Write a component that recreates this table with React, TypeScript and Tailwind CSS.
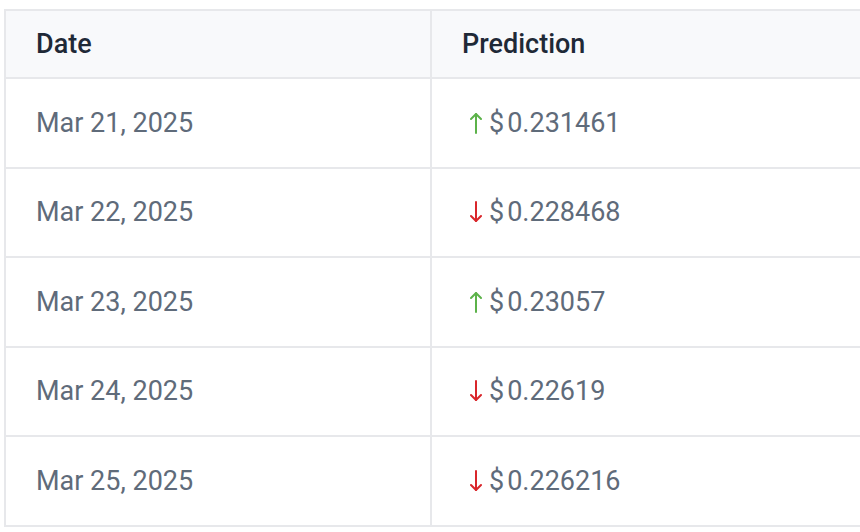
import React from "react";

type Row = { date: string; up: boolean; price: string };

const rows: Row[] = [
  { date: "Mar 21, 2025", up: true, price: "0.231461" },
  { date: "Mar 22, 2025", up: false, price: "0.228468" },
  { date: "Mar 23, 2025", up: true, price: "0.23057" },
  { date: "Mar 24, 2025", up: false, price: "0.22619" },
  { date: "Mar 25, 2025", up: false, price: "0.226216" },
];

function Arrow({ up }: { up: boolean }) {
  return (
    <svg
      width="12"
      height="22"
      viewBox="0 0 12 22"
      fill="none"
      stroke={up ? "#5cb24a" : "#d9262b"}
      strokeWidth="2"
      strokeLinecap="round"
      strokeLinejoin="round"
      className={up ? "ml-[8px] mr-[7px]" : "ml-[8px] mr-[7px] rotate-180"}
    >
      <path d="M6 2v19" />
      <path d="M1 7 6 2l5 5" />
    </svg>
  );
}

export default function App() {
  return (
    <div className="w-[860px] h-[532px] overflow-hidden bg-white pt-[9px] pl-[4px] font-['Roboto',sans-serif]">
      <div className="w-[900px] border-2 border-[#e7e8eb]">
        <div className="grid grid-cols-[426px_1fr] h-[68px] bg-[#f8f9fb] border-b-2 border-[#e7e8eb] text-[27px] font-medium text-[#1f2937]">
          <div className="flex items-center pl-[30px] border-r-2 border-[#e7e8eb]">Date</div>
          <div className="flex items-center pl-[30px]">Prediction</div>
        </div>
        {rows.map((r, i) => (
          <div
            key={r.date}
            className={
              i < rows.length - 1
                ? "grid grid-cols-[426px_1fr] h-[89.5px] border-b-2 border-[#e7e8eb] text-[27px] text-[#5f6b7a]"
                : "grid grid-cols-[426px_1fr] h-[87.5px] text-[27px] text-[#5f6b7a]"
            }
          >
            <div className="flex items-center pl-[30px] border-r-2 border-[#e7e8eb]">{r.date}</div>
            <div className="flex items-center pl-[30px]">
              <Arrow up={r.up} />
              <span>$</span>
              <span className="ml-[3px]">{r.price}</span>
            </div>
          </div>
        ))}
      </div>
    </div>
  );
}
